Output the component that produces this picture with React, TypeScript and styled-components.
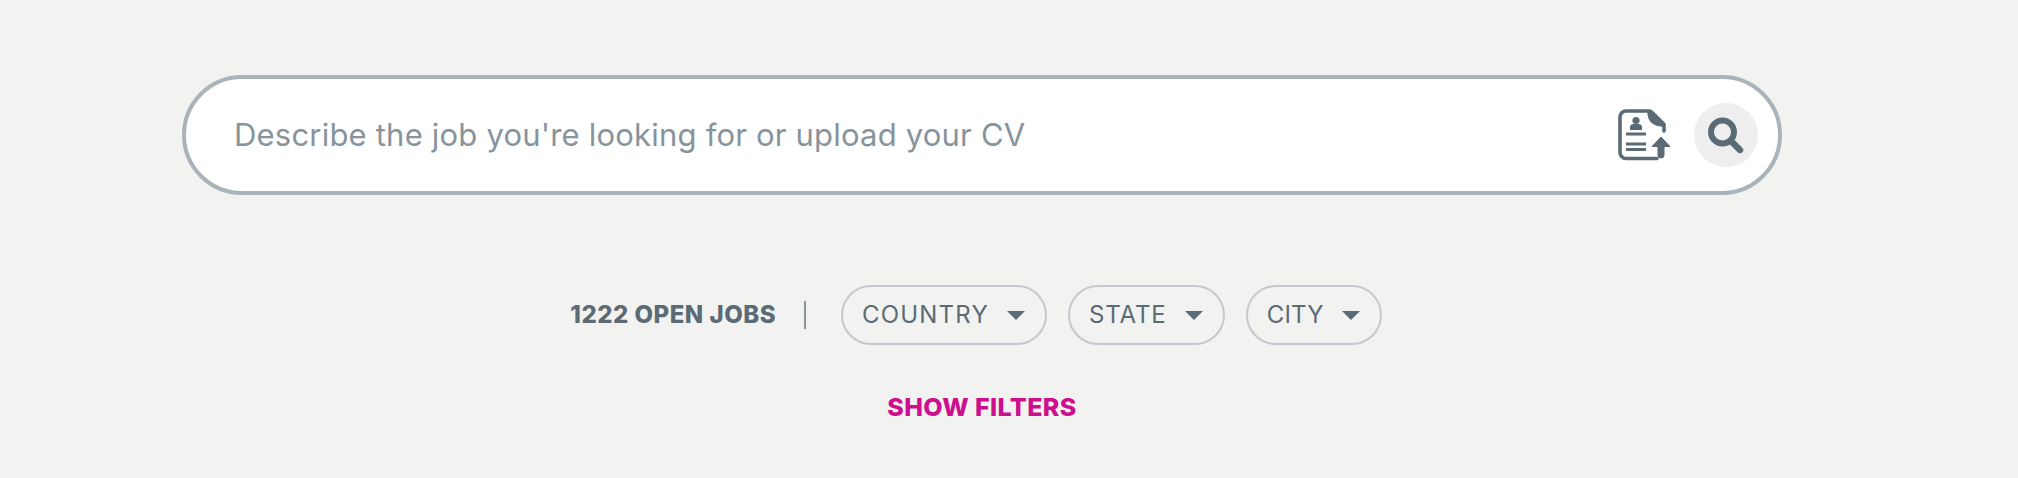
import { createGlobalStyle } from 'styled-components';
import styled from 'styled-components';

const GlobalStyle = createGlobalStyle`
  html, body {
    margin: 0;
    padding: 0;
    background: #f2f2f0;
    font-family: Inter, "Liberation Sans", sans-serif;
  }
`;

const Page = styled.div`
  width: 1600px;
  height: 478px;
  margin-left: 182px;
  padding-top: 75px;
  box-sizing: border-box;
  display: flex;
  flex-direction: column;
  align-items: center;
  overflow: hidden;
`;

const SearchBar = styled.div`
  width: 100%;
  height: 120px;
  box-sizing: border-box;
  display: flex;
  align-items: center;
  padding: 0 20px 0 48px;
  background: #fff;
  border: 4px solid #a9b3b9;
  border-radius: 60px;
`;

const SearchInput = styled.input`
  flex: 1;
  min-width: 0;
  border: 0;
  outline: 0;
  padding: 0 0 2px;
  background: transparent;
  font: 400 31px Inter, sans-serif;
  letter-spacing: 0.2px;
  color: #87949c;
  &::placeholder {
    color: #87949c;
    opacity: 1;
  }
`;

const UploadButton = styled.button`
  display: flex;
  border: 0;
  padding: 0;
  margin-right: 22px;
  background: none;
  cursor: pointer;
`;

const RoundButton = styled.button`
  width: 64px;
  height: 64px;
  display: flex;
  align-items: center;
  justify-content: center;
  border: 0;
  padding: 0;
  border-radius: 50%;
  background: #eeeeee;
  cursor: pointer;
`;

const FilterRow = styled.div`
  margin-top: 90px;
  margin-left: -12px;
  display: flex;
  align-items: center;
  color: #5b6b75;
`;

const JobCount = styled.span`
  font-size: 24px;
  font-weight: 800;
  letter-spacing: 0.5px;
  white-space: nowrap;
  padding-bottom: 1px;
`;

const Divider = styled.span`
  width: 2px;
  height: 28px;
  margin: 0 35px 0 28px;
  background: #87949c;
`;

const Pills = styled.div`
  display: flex;
  gap: 21px;
`;

const Pill = styled.button<{ $tracking: number }>`
  height: 60px;
  box-sizing: border-box;
  display: flex;
  align-items: center;
  gap: 18px;
  padding: 0 20px 1px 19px;
  border: 2.5px solid #c3c9cc;
  border-radius: 30px;
  background: transparent;
  color: #5b6b75;
  font: 400 24px Inter, sans-serif;
  letter-spacing: ${(p) => p.$tracking}px;
  cursor: pointer;
`;

const Caret = styled.span`
  width: 0;
  height: 0;
  margin-top: 1px;
  border-left: 9px solid transparent;
  border-right: 9px solid transparent;
  border-top: 9px solid #5b6b75;
`;

const ShowFilters = styled.button`
  margin-top: 47px;
  border: 0;
  padding: 0;
  background: none;
  color: #cc0e8f;
  font: 800 25px Inter, sans-serif;
  letter-spacing: 0.4px;
  cursor: pointer;
`;

function CvUploadIcon() {
  return (
    <svg width="54" height="52" viewBox="0 0 54 52" fill="none">
      <path
        d="M39 49.500H8a6 6 0 0 1-6-6V8a6 6 0 0 1 6-6h24l14 13.500V22"
        stroke="#5b6b75"
        strokeWidth="3.600"
        strokeLinecap="round"
        strokeLinejoin="round"
      />
      <path d="M30 2c0 10 6 15 16 15v-3L34 2z" fill="#5b6b75" stroke="#5b6b75" strokeWidth="1.500" strokeLinejoin="round" />
      <circle cx="18" cy="11.500" r="3.600" fill="#5b6b75" />
      <path d="M12 21v-3c0-2 2-3 3.500-3h5c1.500 0 3.500 1 3.500 3v3z" fill="#5b6b75" />
      <path d="M8 25h20M8 35h20M8 40.500h20" stroke="#5b6b75" strokeWidth="3" />
      <path d="M43 28l9 9.500h-6V46a3 3 0 0 1-6 0v-8.500h-6z" fill="#5b6b75" stroke="#5b6b75" strokeWidth="1" strokeLinejoin="round" />
    </svg>
  );
}

function SearchIcon() {
  return (
    <svg width="38" height="38" viewBox="0 0 38 38" fill="none">
      <circle cx="15.500" cy="16" r="11.500" stroke="#5b6b75" strokeWidth="6" />
      <path d="M25 26l8 8" stroke="#5b6b75" strokeWidth="6.500" strokeLinecap="round" />
    </svg>
  );
}

const FILTERS = [
  { label: 'COUNTRY', tracking: 1.2 },
  { label: 'STATE', tracking: 0.9 },
  { label: 'CITY', tracking: 0.2 },
];

export default function App() {
  return (
    <>
      <GlobalStyle />
      <Page>
        <SearchBar>
          <SearchInput placeholder="Describe the job you're looking for or upload your CV" />
          <UploadButton aria-label="Upload CV">
            <CvUploadIcon />
          </UploadButton>
          <RoundButton aria-label="Search">
            <SearchIcon />
          </RoundButton>
        </SearchBar>
        <FilterRow>
          <JobCount>1222 OPEN JOBS</JobCount>
          <Divider />
          <Pills>
            {FILTERS.map((f) => (
              <Pill key={f.label} $tracking={f.tracking}>
                {f.label}
                <Caret />
              </Pill>
            ))}
          </Pills>
        </FilterRow>
        <ShowFilters>SHOW FILTERS</ShowFilters>
      </Page>
    </>
  );
}
